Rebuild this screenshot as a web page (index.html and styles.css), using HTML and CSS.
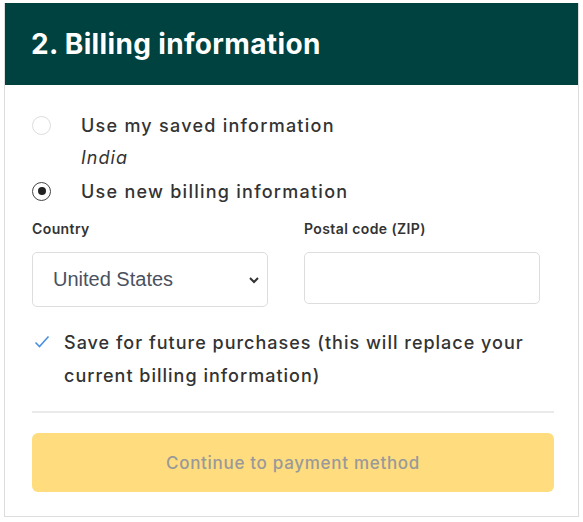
FILE: index.html
```html
<!DOCTYPE html>
<html lang="en">
<head>
    <meta charset="UTF-8">
    <meta name="viewport" content="width=device-width, initial-scale=1.0">
    <title>Billing information</title>
    <link rel="stylesheet" href="styles.css">
</head>
<body>
    <section class="card">
        <header class="card-header">
            <h1>2. Billing information</h1>
        </header>
        <div class="card-body">
            <label class="option">
                <span class="radio"></span>
                <span class="option-text">Use my saved information</span>
            </label>
            <div class="saved">India</div>
            <label class="option">
                <span class="radio checked"></span>
                <span class="option-text">Use new billing information</span>
            </label>

            <div class="fields">
                <div class="field">
                    <span class="field-label">Country</span>
                    <div class="select">
                        <span>United States</span>
                        <svg width="12" height="8" viewBox="0 0 12 8"><path d="M2 2l4 4 4-4" fill="none" stroke="#333" stroke-width="2"/></svg>
                    </div>
                </div>
                <div class="field">
                    <span class="field-label">Postal code (ZIP)</span>
                    <div class="input"></div>
                </div>
            </div>

            <div class="save">
                <svg class="check" width="16" height="14" viewBox="0 0 16 14"><path d="M1.5 7.5l4 4 9-10" fill="none" stroke="#4a90e2" stroke-width="1.6"/></svg>
                <p>Save for future purchases (this will replace your current billing information)</p>
            </div>

            <hr class="divider">

            <button class="continue" disabled>Continue to payment method</button>
        </div>
    </section>
</body>
</html>
```

FILE: styles.css
```css
body {
    margin: 0;
    padding: 3px 4px 0 4px;
    font-family: Inter, "Noto Sans", sans-serif;
    color: #333;
    background-color: white;
}

.card {
    width: 573px;
    border: 1px solid #ddd;
    border-top: none;
}

.card-header {
    background-color: #00423f;
    color: white;
    height: 82px;
    display: flex;
    align-items: center;
    padding: 0 26px;
}

.card-header h1 {
    margin: 0;
    font-size: 28px;
    font-weight: 700;
    letter-spacing: 0.35px;
}

.card-body {
    padding: 25px 24px 24px 27px;
}

.option {
    display: flex;
    align-items: center;
    height: 30px;
}

.radio {
    width: 17px;
    height: 17px;
    border: 1.5px solid #ddd;
    border-radius: 50%;
    margin-left: 0;
    margin-right: 30px;
    display: flex;
    align-items: center;
    justify-content: center;
}

.radio.checked {
    border-color: #444;
}

.radio.checked::after {
    content: "";
    width: 8px;
    height: 8px;
    border-radius: 50%;
    background-color: #222;
}

.option-text {
    font-size: 18px;
    font-weight: 500;
    letter-spacing: 1.25px;
}

.saved {
    font-size: 18px;
    font-style: italic;
    letter-spacing: 1px;
    margin: 2px 0 2px 49px;
    height: 32px;
    line-height: 32px;
}

.fields {
    display: flex;
    gap: 36px;
    margin-top: 14px;
}

.field {
    width: 236px;
}

.field-label {
    display: block;
    font-size: 14px;
    font-weight: 600;
    letter-spacing: 0.4px;
    margin-bottom: 15px;
}

.select {
    height: 53px;
    border: 1px solid #ddd;
    border-radius: 5px;
    display: flex;
    align-items: center;
    justify-content: space-between;
    padding: 0 7px 0 20px;
    font-family: "Liberation Sans", Arial, sans-serif;
    font-size: 20px;
    color: #4a5260;
}

.input {
    height: 50px;
    border: 1px solid #ddd;
    border-radius: 5px;
}

.save {
    display: flex;
    align-items: flex-start;
    margin-top: 19px;
}

.check {
    margin: 9px 14px 0 2px;
    flex-shrink: 0;
}

.save p {
    margin: 0;
    font-size: 18px;
    font-weight: 500;
    line-height: 33px;
    letter-spacing: 1px;
}

.divider {
    border: none;
    border-top: 2px solid #eaeaea;
    margin: 19px 0 20px 0;
}

.continue {
    width: 100%;
    height: 59px;
    border: none;
    border-radius: 6px;
    background-color: #ffdd7f;
    color: #999;
    font-family: Inter, "Noto Sans", sans-serif;
    font-size: 17px;
    font-weight: 500;
    letter-spacing: 0.7px;
}
```
